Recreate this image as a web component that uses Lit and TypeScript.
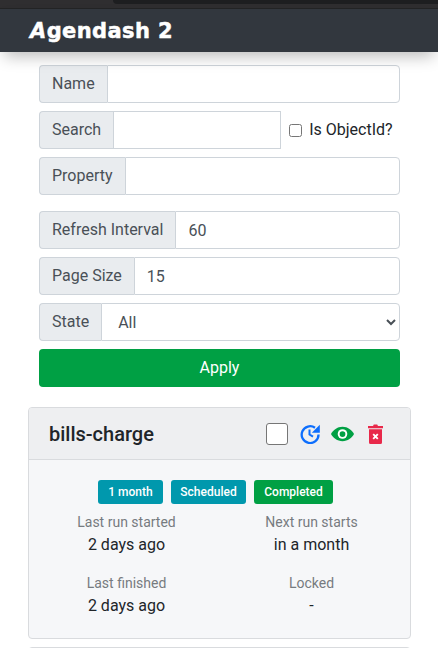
import { LitElement, html, css } from "lit";
import { customElement } from "lit/decorators.js";

@customElement("app-root")
export class AppRoot extends LitElement {
  static styles = css`
    :host { display: block; width: 438px; height: 648px; overflow: hidden; background: #fff; font-family: Roboto, "Liberation Sans", sans-serif; font-size: 16px; line-height: 24px; color: #212529; }
    * { box-sizing: border-box; }
    .top { height: 9px; background: #2f2e30; border-bottom: 1px solid #232425; }
    .notch { display: block; height: 4px; margin-left: 113px; background: #1d1e20; border-radius: 0 0 0 5px; }
    .nav { position: relative; height: 43px; box-shadow: 0 8px 16px -4px rgba(0,0,0,.28); padding-left: 30px; display: flex; align-items: center; background: #32373e; }
    .brand { font-family: "DejaVu Sans", sans-serif; font-weight: 700; font-size: 21px; letter-spacing: .4px; color: #fff; line-height: 24px; -webkit-text-stroke: .5px #fff; }
    .brand i { font-style: italic; }
    form { padding: 13px 38px 0 39px; display: flex; flex-direction: column; gap: 8px; }
    .gap { margin-top: 8px; }
    .group { display: flex; height: 38px; align-items: center; }
    .label { height: 38px; padding: 6px 12px; background: #e9ecef; border: 1px solid #ced4da; border-right: 0; border-radius: 4px 0 0 4px; color: #495057; white-space: nowrap; }
    .field { flex: 1; min-width: 0; height: 38px; padding: 6px 12px; border: 1px solid #ced4da; border-radius: 0 4px 4px 0; font: inherit; color: #495057; background: #fff; }
    .search { flex: 0 0 168px; border-radius: 0; }
    .check { display: flex; align-items: center; margin-left: 8px; color: #212529; white-space: nowrap; }
    .check input { width: 13px; height: 13px; margin: 0 7px 0 0; }
    select { flex: 1; min-width: 0; height: 38px; padding: 6px 8px 6px 12px; border: 1px solid #ced4da; border-radius: 0 4px 4px 0; font: inherit; color: #495057; background: #fff; }
    .apply { height: 38px; border: 0; border-radius: 4px; background: #00a044; color: #fff; font: inherit; }
    .card { margin: 20px 27px 0 28px; height: 232px; background: #f6f7f9; border: 1px solid #d9dbde; border-radius: 4px; }
    .head { height: 52px; background: #eeeff1; border-bottom: 1px solid #d9dbde; border-radius: 3px 3px 0 0; display: flex; align-items: center; padding: 0 27px 0 20px; }
    .name { flex: 1; font-size: 20px; font-weight: 500; }
    .box { width: 22px; height: 22px; background: #fff; border: 1px solid #767676; border-radius: 3px; margin-right: 12px; }
    .icons { display: flex; align-items: center; gap: 11px; }
    .eye { margin-right: 3px; }
    .body { padding: 20px 0 0 69px; }
    .badges { display: grid; grid-template-columns: 65px 75px 79px; gap: 8px; }
    .badge { height: 24px; border-radius: 3px; color: #fff; font-size: 12px; font-weight: 500; line-height: 24px; text-align: center; background: #0098ad; }
    .badge.ok { background: #00a044; }
    .grid { display: grid; grid-template-columns: 185px 185px; margin: 8px 0 0 -64px; row-gap: 16px; text-align: center; }
    .k { font-size: 14px; color: #767b80; line-height: 21px; }
    .v { line-height: 24px; }
    .next { margin: 8px 27px 0 28px; height: 20px; border: 1px solid #d9dbde; border-radius: 4px 4px 0 0; background: #eeeff1; }
  `;

  render() {
    return html`
      <div class="top"><span class="notch"></span></div>
      <nav class="nav"><span class="brand"><i>A</i>gendash 2</span></nav>
      <form>
        <div class="group"><span class="label">Name</span><input class="field" type="text" /></div>
        <div class="group"><span class="label">Search</span><input class="field search" type="text" /><label class="check"><input type="checkbox" />Is ObjectId?</label></div>
        <div class="group"><span class="label">Property</span><input class="field" type="text" /></div>
        <div class="group gap"><span class="label">Refresh Interval</span><input class="field" type="text" .value=${"60"} /></div>
        <div class="group"><span class="label">Page Size</span><input class="field" type="text" .value=${"15"} /></div>
        <div class="group"><span class="label">State</span><select><option>All</option></select></div>
        <button class="apply" type="button">Apply</button>
      </form>
      <section class="card">
        <div class="head">
          <span class="name">bills-charge</span>
          <span class="box"></span>
          <span class="icons">
            <svg width="20" height="20" viewBox="0 0 20 20" fill="none" stroke="#0d6efd" stroke-width="2.300"><path d="M15 3.800A8.400 8.400 0 1 0 18.500 10.500"/><path d="M9.500 5.500v5l3.500 2.200" stroke-width="2"/><path d="M19.800 .8v8H11.800z" fill="#0d6efd" stroke="none"/></svg>
            <svg class="eye" width="23" height="16" viewBox="0 0 24 16"><path d="M12 .5C6.500 .5 2.200 4 0 8c2.200 4 6.500 7.500 12 7.500S21.800 12 24 8C21.800 4 17.500 .5 12 .5z" fill="#00a044"/><circle cx="12" cy="8" r="5" fill="#fff"/><circle cx="12" cy="8" r="3" fill="#00a044"/></svg>
            <svg width="15" height="20" viewBox="0 0 15 20"><path d="M0 2h5L5.800.5h3.400L10 2h5v2.200H0z" fill="#e8284a"/><path d="M1 5.200h13v13.300a1.500 1.500 0 0 1-1.500 1.500h-10A1.500 1.500 0 0 1 1 18.500z" fill="#e8284a"/><path d="M5.200 10.200l4.600 4.600M9.800 10.200l-4.600 4.600" stroke="#fff" stroke-width="1.900"/></svg>
          </span>
        </div>
        <div class="body">
          <div class="badges"><span class="badge">1 month</span><span class="badge">Scheduled</span><span class="badge ok">Completed</span></div>
          <div class="grid">
            <div><div class="k">Last run started</div><div class="v">2 days ago</div></div>
            <div><div class="k">Next run starts</div><div class="v">in a month</div></div>
            <div><div class="k">Last finished</div><div class="v">2 days ago</div></div>
            <div><div class="k">Locked</div><div class="v">-</div></div>
          </div>
        </div>
      </section>
      <div class="next"></div>
    `;
  }
}
